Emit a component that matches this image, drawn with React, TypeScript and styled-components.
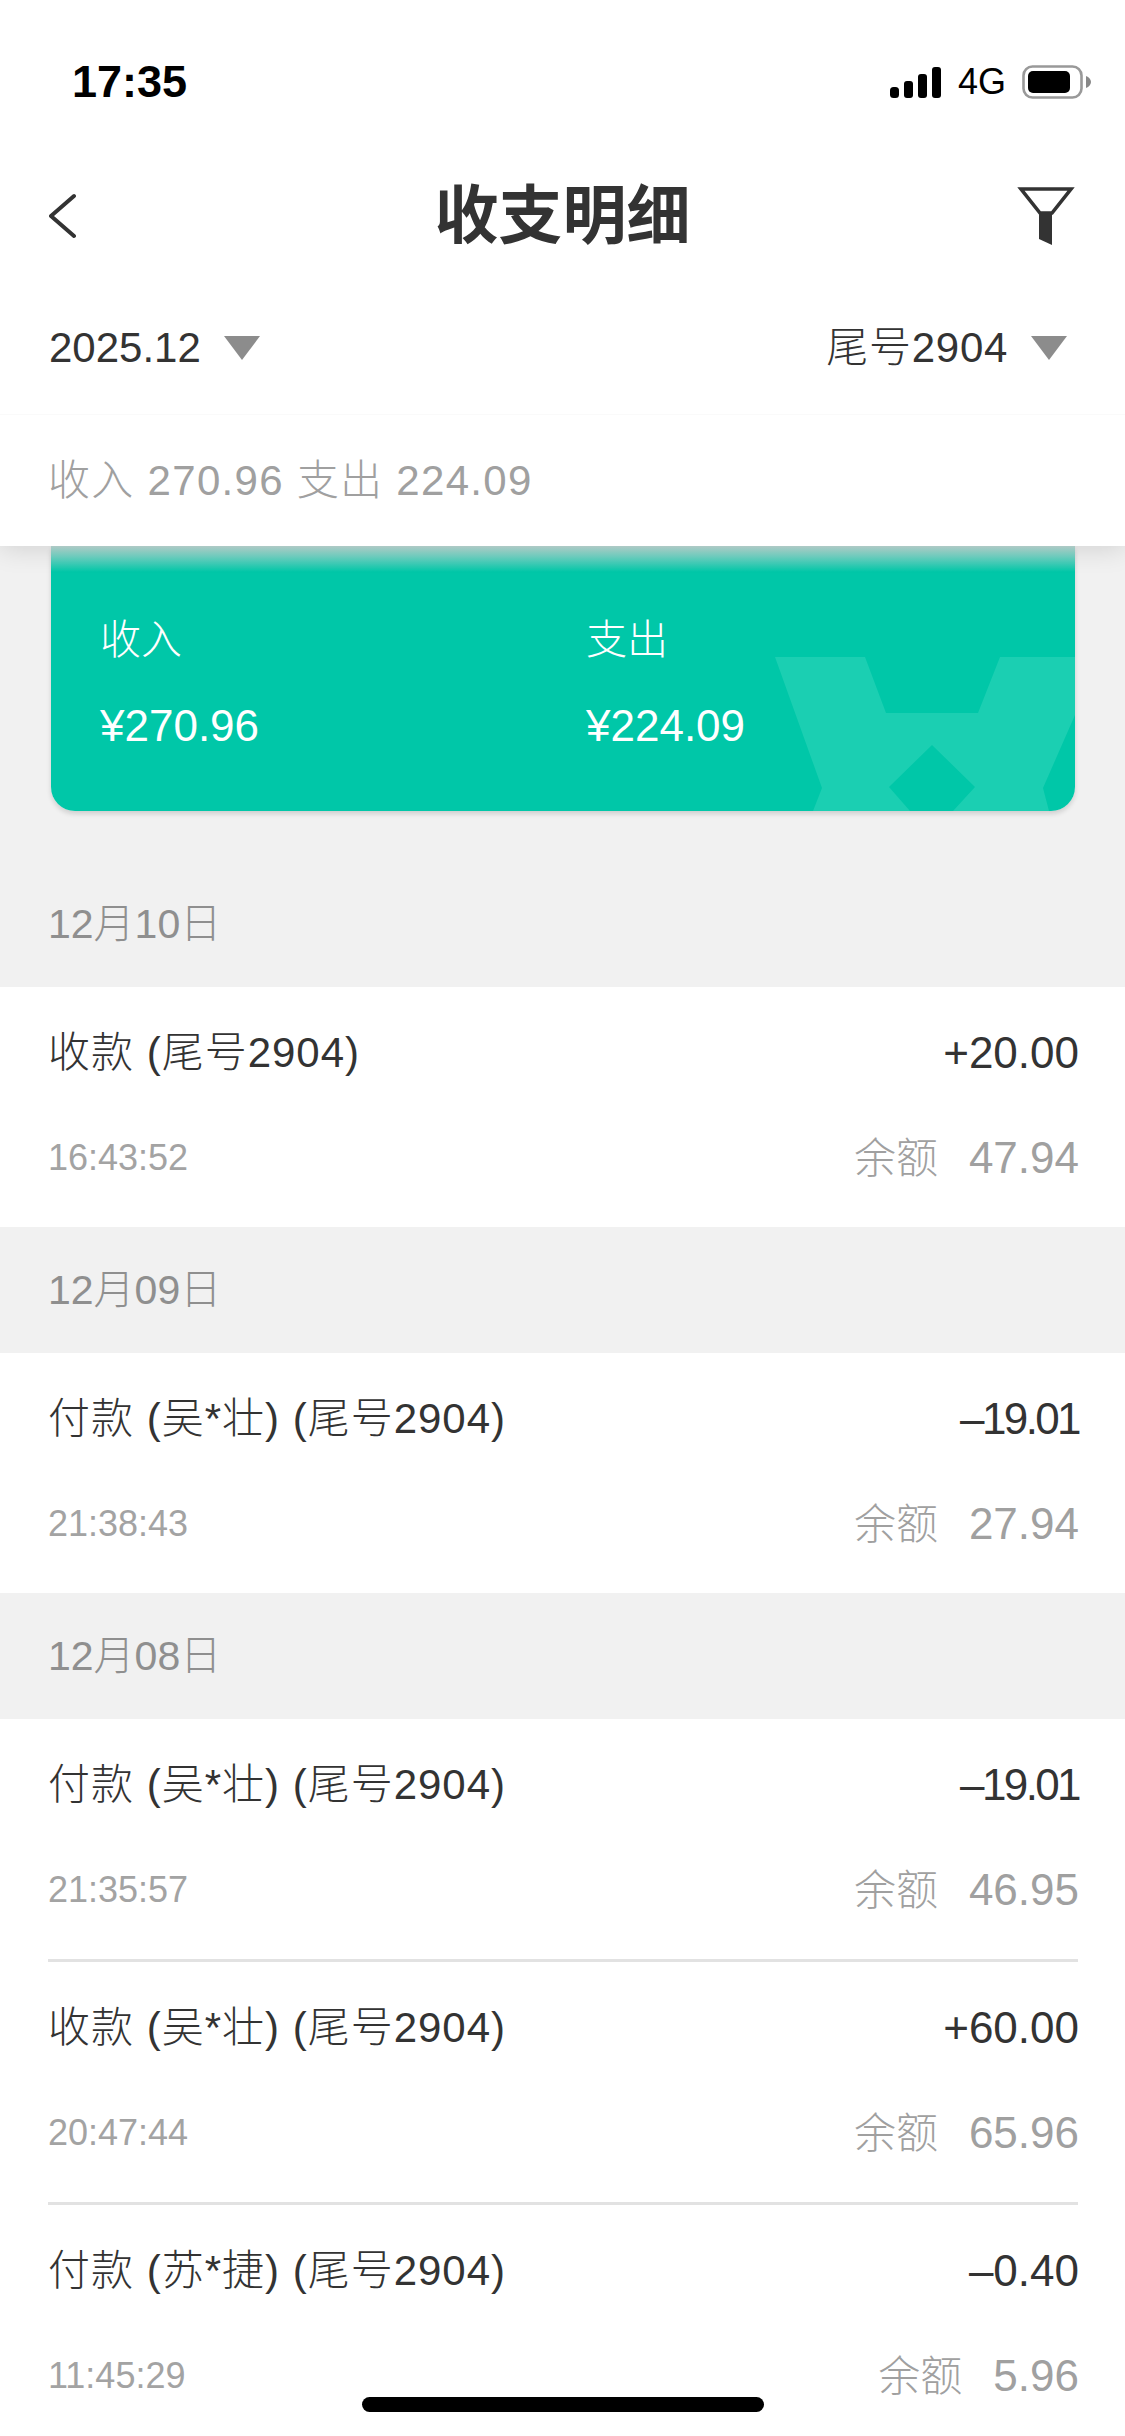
import React from "react";
import styled, { createGlobalStyle } from "styled-components";

const GlobalStyle = createGlobalStyle`
  html, body { margin: 0; padding: 0; background: #f1f1f1; }
  body { font-family: "Liberation Sans", "Noto Sans CJK SC", sans-serif; }
`;

const Page = styled.div`
  position: relative;
  width: 1125px;
  height: 2436px;
  overflow: hidden;
  background: #f1f1f1;
  color: #333;
  font-size: 42px;
  line-height: 50px;
  font-weight: 300;
`;

const Header = styled.header`
  position: relative;
  z-index: 2;
  background: #fff;
  box-shadow: 0 2px 26px rgba(0, 0, 0, 0.14);
`;

const StatusBar = styled.div`
  height: 164px;
  display: flex;
  align-items: center;
  justify-content: space-between;
  padding: 0 34px 0 72px;
`;

const Clock = styled.span`
  font-size: 45px;
  font-weight: 700;
  color: #000;
`;

const StatusIcons = styled.div`
  display: flex;
  align-items: center;
  gap: 16px;
`;

const Network = styled.span`
  font-size: 36px;
  font-weight: 400;
  color: #000;
  margin-left: 1px;
`;

const NavBar = styled.nav`
  height: 104px;
  display: grid;
  grid-template-columns: 1fr auto 1fr;
  align-items: center;
  padding: 0 49px;
`;

const Title = styled.h1`
  margin: 0;
  font-size: 64px;
  line-height: 72px;
  font-weight: 700;
  color: #333;
`;

const FilterIcon = styled.svg`
  justify-self: end;
`;

const FilterRow = styled.div`
  height: 132px;
  padding: 14px 57px 0 49px;
  display: flex;
  align-items: center;
  justify-content: space-between;
`;

const Selector = styled.div<{ $spacing?: number }>`
  display: flex;
  align-items: center;
  gap: 22px;
  color: #333;
  letter-spacing: ${(p) => p.$spacing ?? 0}px;
`;

const Caret = styled.svg`
  filter: blur(0.6px);
`;

const Summary = styled.div`
  height: 132px;
  padding: 0 48px;
  display: flex;
  align-items: center;
  color: #a0a0a0;
  border-top: 1px solid #fafafa;
  box-sizing: border-box;
  letter-spacing: 1.3px;
`;

const CardFrame = styled.div`
  margin: 0 50px 50px 51px;
  border-radius: 0 0 24px 24px;
  box-shadow: 0 3px 5px rgba(0, 0, 0, 0.14);
`;

const Card = styled.section`
  position: relative;
  height: 265px;
  border-radius: 0 0 24px 24px;
  background: #00c7a8;
  color: #fff;
  overflow: hidden;

  &::before {
    content: "";
    position: absolute;
    left: 0;
    right: 0;
    top: 0;
    height: 26px;
    background: linear-gradient(rgba(222, 222, 222, 0.85), rgba(222, 222, 222, 0));
  }
`;

const Watermark = styled.svg`
  position: absolute;
  inset: 0;
`;

const CardColumns = styled.div`
  position: relative;
  display: grid;
  grid-template-columns: 486px 1fr;
  padding: 70px 0 0 49px;
`;

const CardColumn = styled.div`
  display: flex;
  flex-direction: column;
  gap: 38px;
`;

const CardLabel = styled.span`
  font-size: 41px;
  line-height: 48px;
`;

const CardValue = styled.span`
  font-size: 44px;
  line-height: 48px;
`;

const DateRow = styled.div`
  height: 126px;
  padding: 0 48px;
  display: flex;
  align-items: center;
  font-size: 41px;
  color: #8f8f8f;
`;

const Row = styled.div`
  height: 240px;
  box-sizing: border-box;
  padding: 0 46px 0 48px;
  background: #fff;
`;

const RowLine = styled.div<{ $height: number }>`
  height: ${(p) => p.$height}px;
  display: flex;
  align-items: center;
  justify-content: space-between;
`;

const RowTitle = styled.span`
  color: #333;
  letter-spacing: 1px;
`;

const Amount = styled.span<{ $spacing?: number }>`
  font-size: 44px;
  color: #333;
  letter-spacing: ${(p) => p.$spacing ?? 0}px;
`;

const Time = styled.span`
  font-size: 36px;
  color: #a3a3a3;
`;

const Balance = styled.span`
  display: flex;
  align-items: baseline;
  gap: 31px;
  font-size: 42px;
  color: #a0a0a0;
`;

const BalanceValue = styled.span`
  font-size: 44px;
`;

const DividerWrap = styled.div`
  background: #fff;
  padding: 0 47px 0 48px;
`;

const Divider = styled.div`
  height: 3px;
  background: #e2e2e2;
`;

const HomeIndicator = styled.div`
  position: absolute;
  left: 362px;
  top: 2397px;
  width: 402px;
  height: 15px;
  border-radius: 8px;
  background: #000;
`;

function Signal() {
  return (
    <svg width="51" height="32" viewBox="0 0 51 32" style={{ marginTop: 2 }}>
      <rect x="0" y="20" width="9" height="11" rx="3.5" fill="#000" />
      <rect x="14" y="14" width="9" height="17" rx="3" fill="#000" />
      <rect x="28" y="7" width="9" height="24" rx="3" fill="#000" />
      <rect x="42" y="0" width="9" height="31" rx="3" fill="#000" />
    </svg>
  );
}

function Battery() {
  return (
    <svg width="69" height="34" viewBox="0 0 69 34">
      <rect x="1.5" y="1.5" width="58" height="31" rx="9" fill="none" stroke="#999" strokeWidth="2.6" />
      <rect x="6" y="6" width="42" height="22" rx="5" fill="#000" />
      <path d="M64 11 C67 12 69 14.5 69 17 C69 19.5 67 22 64 23 Z" fill="#888" />
    </svg>
  );
}

function Down() {
  return (
    <Caret width="38" height="24" viewBox="0 0 38 24">
      <path d="M1 0 H37 L19 24 Z" fill="#8c8c8c" />
    </Caret>
  );
}

type Item = { title: string; amount: string; time: string; balance: string; amountSpacing?: number };
type Group = { date: string; items: Item[] };

const groups: Group[] = [
  { date: "12月10日", items: [{ title: "收款 (尾号2904)", amount: "+20.00", time: "16:43:52", balance: "47.94" }] },
  {
    date: "12月09日",
    items: [{ title: "付款 (吴*壮) (尾号2904)", amount: "–19.01", time: "21:38:43", balance: "27.94", amountSpacing: -2.6 }],
  },
  {
    date: "12月08日",
    items: [
      { title: "付款 (吴*壮) (尾号2904)", amount: "–19.01", time: "21:35:57", balance: "46.95", amountSpacing: -2.6 },
      { title: "收款 (吴*壮) (尾号2904)", amount: "+60.00", time: "20:47:44", balance: "65.96" },
      { title: "付款 (苏*捷) (尾号2904)", amount: "–0.40", time: "11:45:29", balance: "5.96" },
    ],
  },
];

export default function App() {
  return (
    <Page>
      <GlobalStyle />
      <Header>
        <StatusBar>
          <Clock>17:35</Clock>
          <StatusIcons>
            <Signal />
            <Network>4G</Network>
            <Battery />
          </StatusIcons>
        </StatusBar>
        <NavBar>
          <svg width="30" height="46" viewBox="0 0 30 46">
            <path d="M25 3 L2 23 L25 43" fill="none" stroke="#333" strokeWidth="4" strokeLinecap="round" strokeLinejoin="round" />
          </svg>
          <Title>收支明细</Title>
          <FilterIcon width="60" height="60" viewBox="0 0 60 60">
            <path d="M5 3 H55 L36 27 H24 Z" fill="none" stroke="#333" strokeWidth="3.6" />
            <path d="M23 27 H36 V59 L23 53 Z" fill="#333" />
          </FilterIcon>
        </NavBar>
        <FilterRow>
          <Selector>
            2025.12
            <Down />
          </Selector>
          <Selector $spacing={0.7}>
            尾号2904
            <Down />
          </Selector>
        </FilterRow>
        <Summary>收入 270.96 支出 224.09</Summary>
      </Header>

      <CardFrame>
        <Card>
          <Watermark width="1024" height="265" viewBox="0 0 1024 265">
            <path
              d="M724 111 H814 L835 167 H927 L949 111 H1024 V169 L992 242 L998 265 H902 L924 241 L881 199 L838 241 L859 265 H762 L771 242 Z"
              fill="#1bcfb2"
            />
          </Watermark>
          <CardColumns>
            <CardColumn>
              <CardLabel>收入</CardLabel>
              <CardValue>¥270.96</CardValue>
            </CardColumn>
            <CardColumn>
              <CardLabel>支出</CardLabel>
              <CardValue>¥224.09</CardValue>
            </CardColumn>
          </CardColumns>
        </Card>
      </CardFrame>

      {groups.map((group) => (
        <div key={group.date}>
          <DateRow>{group.date}</DateRow>
          {group.items.map((item, index) => (
            <React.Fragment key={item.time}>
              {index > 0 && (
                <DividerWrap>
                  <Divider />
                </DividerWrap>
              )}
              <Row>
                <RowLine $height={132}>
                  <RowTitle>{item.title}</RowTitle>
                  <Amount $spacing={item.amountSpacing}>{item.amount}</Amount>
                </RowLine>
                <RowLine $height={78}>
                  <Time>{item.time}</Time>
                  <Balance>
                    <span>余额</span>
                    <BalanceValue>{item.balance}</BalanceValue>
                  </Balance>
                </RowLine>
              </Row>
            </React.Fragment>
          ))}
        </div>
      ))}

      <HomeIndicator />
    </Page>
  );
}
